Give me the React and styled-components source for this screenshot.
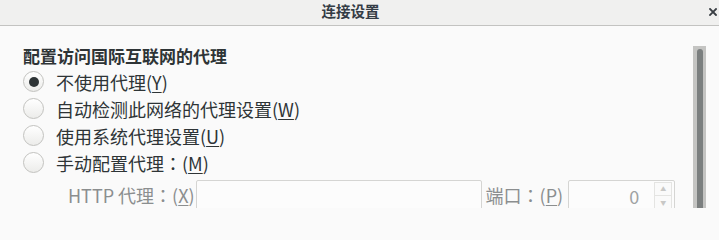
import React from "react";
import styled, { createGlobalStyle } from "styled-components";

const Global = createGlobalStyle`
  html, body { margin: 0; padding: 0; background: #fafafa; }
  body { width: 719px; height: 208px; overflow: hidden; font-family: "Noto Sans CJK SC", "Noto Sans", sans-serif; }
`;

const Window = styled.div`
  width: 719px;
  height: 208px;
  display: flex;
  flex-direction: column;
  background: #fafafa;
  overflow: hidden;
`;

const TitleBar = styled.div`
  height: 26px;
  flex: none;
  box-sizing: border-box;
  border-bottom: 1px solid #c3c3c1;
  background: #f0f0ef;
  display: flex;
  align-items: flex-start;
  position: relative;
`;

const Title = styled.div`
  flex: 1;
  text-align: center;
  padding-right: 18px;
  font-size: 14.5px;
  font-weight: 700;
  line-height: 22px;
  color: #343c45;
`;

const Close = styled.svg`
  position: absolute;
  right: 2px;
  top: 8px;
  width: 8px;
  height: 8px;
`;

const Body = styled.div`
  flex: 1;
  display: flex;
`;

const Main = styled.div`
  flex: 1;
  padding: 18px 0 0 23px;
  display: flex;
  flex-direction: column;
`;

const Heading = styled.div`
  font-size: 17px;
  font-weight: 700;
  line-height: 24px;
  color: #2e3436;
`;

const RadioRow = styled.label`
  height: 27px;
  display: flex;
  align-items: center;
  gap: 12px;
  font-size: 18px;
  color: #2e3436;
`;

const Radio = styled.span`
  width: 21px;
  height: 21px;
  box-sizing: border-box;
  border-radius: 50%;
  border: 1px solid #c2c2bf;
  background: linear-gradient(#ffffff, #ececea);
  display: flex;
  align-items: center;
  justify-content: center;
  flex: none;
  &::after {
    content: "";
    width: 10px;
    height: 10px;
    border-radius: 50%;
    background: #2e3436;
    display: ${(p) => (p.$checked ? "block" : "none")};
  }
`;

const Mn = styled.span`
  text-decoration: underline;
  text-underline-offset: 2px;
  text-decoration-thickness: 1px;
`;

const Colon = styled.span`
  font-family: "Noto Sans CJK TC", "Noto Sans CJK SC", sans-serif;
`;

const ProxyRow = styled.div`
  margin-top: 4px;
  padding-left: 45px;
  display: flex;
  align-items: flex-start;
`;

const FieldLabel = styled.span`
  font-size: 18px;
  line-height: 30px;
  color: #8b8e8f;
  white-space: pre;
  margin-right: ${(p) => p.$gap}px;
`;

const TextInput = styled.div`
  width: 286px;
  height: 34px;
  box-sizing: border-box;
  border: 1px solid #d5d5d3;
  border-radius: 2px;
  background: #fcfcfc;
  margin-right: 4px;
`;

const Spin = styled.div`
  width: 107px;
  height: 34px;
  box-sizing: border-box;
  border: 1px solid #d5d5d3;
  border-radius: 2px;
  background: #fcfcfc;
  display: flex;
  align-items: flex-start;
  padding: 1px 2px 0 0;
`;

const SpinValue = styled.span`
  flex: 1;
  text-align: right;
  font-size: 18px;
  line-height: 28px;
  color: #a0a3a3;
  padding-right: 15px;
`;

const SpinButtons = styled.div`
  width: 18px;
  display: flex;
  flex-direction: column;
`;

const SpinButton = styled.div`
  height: 14px;
  box-sizing: border-box;
  border: 1px solid #e4e4e2;
  border-top-width: ${(p) => (p.$down ? 0 : 1)}px;
  background: #fafafa;
  display: flex;
  align-items: center;
  justify-content: center;
  color: #c8c8c6;
  font-size: 6px;
  line-height: 1;
`;

const Scrollbar = styled.div`
  width: 13px;
  margin: 20px 13px 0 0;
  background: #c4c4c2;
  display: flex;
  justify-content: center;
  padding-top: 3px;
  box-sizing: border-box;
`;

const Thumb = styled.div`
  width: 6px;
  background: #7b7f7f;
  border-radius: 3px 3px 0 0;
  flex: none;
  height: 200px;
`;

export default function App() {
  return (
    <Window>
      <Global />
      <TitleBar>
        <Title>连接设置</Title>
        <Close viewBox="0 0 8 8">
          <path d="M1 1 L7 7 M7 1 L1 7" stroke="#3a3f44" strokeWidth="1.8" strokeLinecap="square" />
        </Close>
      </TitleBar>
      <Body>
        <Main>
          <Heading>配置访问国际互联网的代理</Heading>
          <RadioRow>
            <Radio $checked />
            <span>不使用代理(<Mn>Y</Mn>)</span>
          </RadioRow>
          <RadioRow>
            <Radio />
            <span>自动检测此网络的代理设置(<Mn>W</Mn>)</span>
          </RadioRow>
          <RadioRow>
            <Radio />
            <span>使用系统代理设置(<Mn>U</Mn>)</span>
          </RadioRow>
          <RadioRow>
            <Radio />
            <span>手动配置代理<Colon>：</Colon>(<Mn>M</Mn>)</span>
          </RadioRow>
          <ProxyRow>
            <FieldLabel $gap={1}>HTTP 代理<Colon>：</Colon>(<Mn>X</Mn>)</FieldLabel>
            <TextInput />
            <FieldLabel $gap={5}>端口<Colon>：</Colon>(<Mn>P</Mn>)</FieldLabel>
            <Spin>
              <SpinValue>0</SpinValue>
              <SpinButtons>
                <SpinButton>▲</SpinButton>
                <SpinButton $down>▼</SpinButton>
              </SpinButtons>
            </Spin>
          </ProxyRow>
        </Main>
        <Scrollbar>
          <Thumb />
        </Scrollbar>
      </Body>
    </Window>
  );
}
